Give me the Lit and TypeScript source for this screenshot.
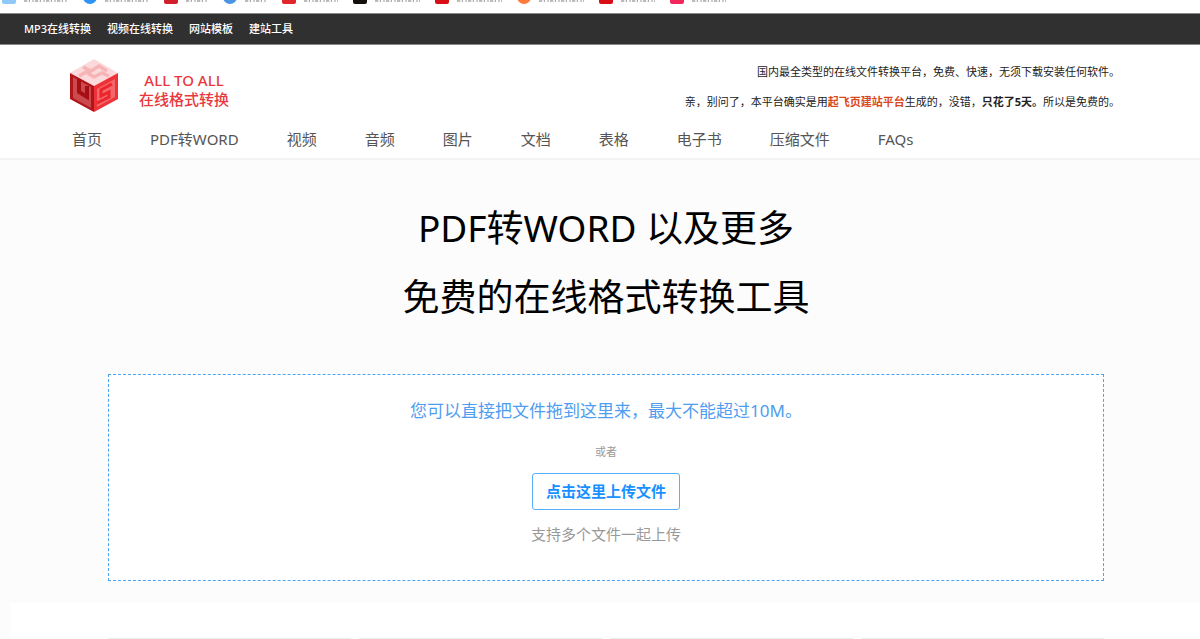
import { LitElement, html, css, svg } from "lit";
import { customElement } from "lit/decorators.js";

interface Bookmark { icon: string; color: string; width: number }

const bookmarks: Bookmark[] = [
  { icon: "tile", color: "#8fcafa", width: 44 },
  { icon: "dot", color: "#2f93f5", width: 44 },
  { icon: "tile", color: "#d0212b", width: 22 },
  { icon: "dot", color: "#4a94e6", width: 22 },
  { icon: "tile", color: "#e0252d", width: 34 },
  { icon: "tile", color: "#16100c", width: 45 },
  { icon: "tile", color: "#d90d16", width: 45 },
  { icon: "dot", color: "#ff7a3d", width: 45 },
  { icon: "tile", color: "#d90d16", width: 34 },
  { icon: "tile", color: "#f0285c", width: 34 },
];

const tools = ["MP3在线转换", "视频在线转换", "网站模板", "建站工具"];
const menu = ["首页", "PDF转WORD", "视频", "音频", "图片", "文档", "表格", "电子书", "压缩文件", "FAQs"];

const cube = svg`
  <path fill="#fcd9da" d="M24 0 48 14 24 27 0 14Z"/>
  <path fill="#b01519" d="M0 14 24 27V53L0 40Z"/>
  <path fill="#ee3338" d="M48 14 24 27V53L48 40Z"/>
  <path fill="none" stroke="#f6b4b6" stroke-width="3.5" d="M13 8 21 12 29 7 37 12M9 17 16 13 24 18 32 14 39 17"/>
  <path fill="#cb4a4d" d="M3 18 21 28V49L3 39Z"/>
  <path fill="none" stroke="#a80f14" stroke-width="4" d="M9 20V33L17 38V27"/>
  <path fill="#f4676b" d="M27 30 45 20V38L27 48Z"/>
  <path fill="none" stroke="#ea262c" stroke-width="3" d="M42 25 31 31V37L39 33V38L27 44"/>
`;

@customElement("app-root")
export class AppRoot extends LitElement {
  static styles = css`
    :host {
      display: flex;
      flex-direction: column;
      min-height: 100vh;
      overflow: hidden;
      background: #fcfcfc;
      color: #333;
      font-family: "Noto Sans", "Noto Sans CJK SC", sans-serif;
      font-size: 12px;
    }
    * { box-sizing: border-box; }
    a { color: inherit; text-decoration: none; }
    p, h1 { margin: 0; }

    .bookmarks {
      display: flex;
      gap: 15px;
      height: 13px;
      padding-left: 2px;
      background: #fff;
    }
    .bookmark {
      display: flex;
      align-items: flex-end;
      gap: 8px;
      height: 4px;
      overflow: hidden;
    }
    .mark { flex: none; width: 14px; height: 14px; }
    .tile { border-radius: 2px; }
    .dot { border-radius: 50%; }
    .trace {
      height: 2px;
      margin-bottom: 2px;
      background: repeating-linear-gradient(90deg, #bbb 0 3px, #eee 3px 5px, #aaa 5px 6px, #fff 6px 8px, #ccc 8px 10px, #fff 10px 11px);
    }

    .toolbar {
      background: #303030;
      border: solid #888;
      border-width: 1px 0;
      color: #fff;
      font-size: 11px;
      font-weight: 500;
    }
    .tools {
      display: flex;
      gap: 16px;
      padding: 0 24px;
      line-height: 30px;
    }

    .header { background: #fff; border-bottom: 2px solid #f3f3f3; }
    .inner { padding: 0 80px 0 70px; }
    .banner {
      display: flex;
      justify-content: space-between;
      padding-top: 12px;
    }
    .brand { display: flex; gap: 21px; color: #e8383d; }
    .logo { display: block; width: 48px; height: 54px; margin-top: 2px; }
    .name {
      padding-top: 14px;
      font-size: 15px;
      font-weight: 500;
      line-height: 19px;
      text-align: center;
    }
    .notes {
      color: #222;
      font-size: 11px;
      line-height: 30px;
      text-align: right;
    }
    .promo { color: #d9481c; font-weight: 700; }

    .menu {
      display: flex;
      gap: 48px;
      padding: 4px 2px 1px;
      color: #555;
      font-size: 15px;
      line-height: 36px;
      white-space: nowrap;
    }

    .hero { padding: 33px 96px 22px 108px; }
    .title {
      color: #000;
      font-size: 37px;
      font-weight: 400;
      line-height: 69px;
      text-align: center;
    }
    .drop {
      display: flex;
      flex-direction: column;
      align-items: center;
      margin-top: 43px;
      padding: 20px 16px 32px;
      border: 1px dashed #4ba3f5;
      background: #fff;
      text-align: center;
    }
    .lead { color: #4f9df0; font-size: 17px; line-height: 32px; }
    .or { padding: 14px 0 10px; color: #999; font-size: 11px; line-height: 22px; }
    .upload {
      padding: 0 13px;
      border: 1px solid #58b0fb;
      border-radius: 3px;
      background: #fff;
      color: #1890ff;
      font: inherit;
      font-size: 15px;
      font-weight: 700;
      line-height: 35px;
      cursor: pointer;
    }
    .hint { padding-top: 10px; color: #999; font-size: 15px; line-height: 28px; }

    .cards {
      flex: 1;
      display: grid;
      grid-template-columns: repeat(4, 1fr);
      gap: 8px;
      margin-left: 10px;
      padding: 35px 96px 0 98px;
      background: #fff;
    }
    .card { border-top: 1px solid #eee; }
  `;

  render() {
    return html`
      <div class="bookmarks" aria-hidden="true">
        ${bookmarks.map((b) => html`
          <div class="bookmark">
            <span class="mark ${b.icon}" style="background:${b.color}"></span>
            <span class="trace" style="width:${b.width}px"></span>
          </div>`)}
      </div>
      <nav class="toolbar">
        <div class="tools">${tools.map((t) => html`<a href="#">${t}</a>`)}</div>
      </nav>
      <header class="header">
        <div class="inner">
          <div class="banner">
            <a class="brand" href="#">
              <svg class="logo" viewBox="0 0 48 54" aria-hidden="true">${cube}</svg>
              <span class="name">ALL TO ALL<br />在线格式转换</span>
            </a>
            <div class="notes">
              <p>国内最全类型的在线文件转换平台，免费、快速，无须下载安装任何软件。</p>
              <p>亲，别问了，本平台确实是用<a class="promo" href="#">起飞页建站平台</a>生成的，没错，<b>只花了5天。</b>所以是免费的。</p>
            </div>
          </div>
          <nav class="menu">${menu.map((m) => html`<a href="#">${m}</a>`)}</nav>
        </div>
      </header>
      <main class="hero">
        <h1 class="title">PDF转WORD 以及更多<br />免费的在线格式转换工具</h1>
        <section class="drop">
          <p class="lead">您可以直接把文件拖到这里来，最大不能超过10M。</p>
          <p class="or">或者</p>
          <button class="upload" type="button">点击这里上传文件</button>
          <p class="hint">支持多个文件一起上传</p>
        </section>
      </main>
      <section class="cards">
        ${[0, 1, 2, 3].map(() => html`<div class="card"></div>`)}
      </section>
    `;
  }
}
